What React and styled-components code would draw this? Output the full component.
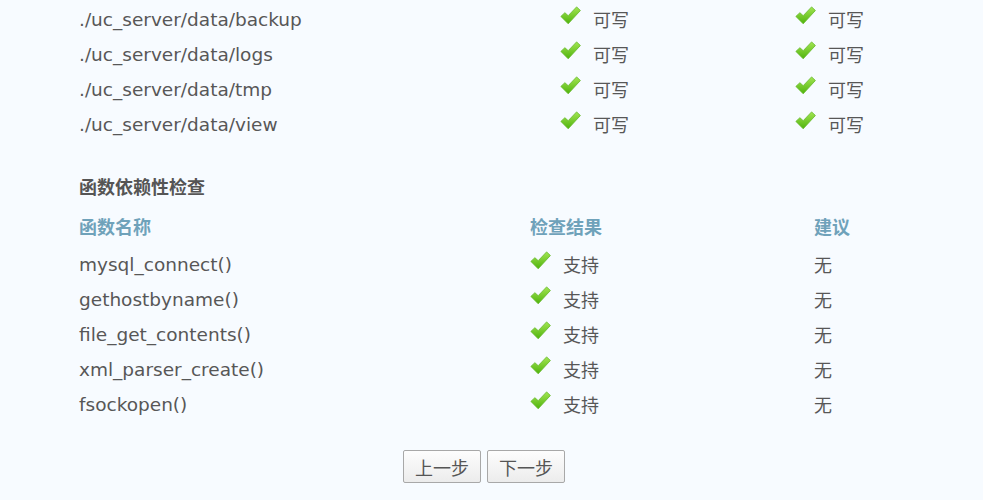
import React from "react";
import styled, { createGlobalStyle } from "styled-components";

const Global = createGlobalStyle`
  html, body { margin: 0; padding: 0; background: #f7fbff; }
  body {
    font-family: "DejaVu Sans", Verdana, "Noto Sans CJK SC", sans-serif;
    font-size: 18.5px;
    color: #575757;
  }
`;

const Page = styled.div`
  width: 983px;
  height: 500px;
  overflow: hidden;
  box-sizing: border-box;
  padding: 2px 0 0 79px;
`;

const Grid = styled.div`
  display: grid;
  grid-template-columns: ${(p) => p.$cols};
  grid-auto-rows: 35px;
  align-items: center;
`;

const Cell = styled.div`
  display: flex;
  align-items: center;
  white-space: nowrap;
  line-height: 35px;
`;

const HeadCell = styled(Cell)`
  font-weight: bold;
  color: #6fa2ba;
  font-family: "Noto Sans CJK SC", sans-serif;
  font-size: 18px;
`;

const Cjk = styled.span`
  font-family: "Noto Sans CJK SC", sans-serif;
  font-size: 18px;
  margin-left: ${(p) => p.$ml || 0}px;
`;

const Title = styled.div`
  margin-top: 30px;
  font-weight: bold;
  font-family: "Noto Sans CJK SC", sans-serif;
  font-size: 18px;
  color: #555;
  line-height: 28px;
`;

const HeadGrid = styled(Grid)`
  margin-top: 9px;
  grid-auto-rows: 38px;
  align-items: start;
`;

const Buttons = styled.div`
  display: flex;
  justify-content: center;
  gap: 6px;
  margin-top: 28px;
  padding-right: 94px;
`;

const Btn = styled.button`
  width: 78px;
  height: 33px;
  border: 1px solid #a8a8a8;
  border-radius: 2px;
  background: linear-gradient(#fdfdfd, #ececec);
  font-family: "Noto Sans CJK SC", sans-serif;
  font-size: 18px;
  color: #555;
  padding: 0;
  cursor: pointer;
`;

const CheckSvg = styled.svg`
  width: 21px;
  height: 19px;
  position: relative;
  top: -4px;
  flex: none;
`;

const Check = () => (
  <CheckSvg viewBox="0 0 21 19">
    <defs>
      <linearGradient id="cg" x1="0" y1="0" x2="0" y2="1">
        <stop offset="0" stopColor="#a3e552" />
        <stop offset="1" stopColor="#4fb30c" />
      </linearGradient>
    </defs>
    <path
      d="M0.9 10.4 L4.9 6.7 L8.2 9.7 L16.6 0.9 L20.4 4.5 L8.2 17.8 Z"
      fill="url(#cg)"
      stroke="#62b826"
      strokeWidth="0.8"
      strokeLinejoin="round"
    />
  </CheckSvg>
);

const dirs = [
  "./uc_server/data/backup",
  "./uc_server/data/logs",
  "./uc_server/data/tmp",
  "./uc_server/data/view",
];

const funcs = [
  "mysql_connect()",
  "gethostbyname()",
  "file_get_contents()",
  "xml_parser_create()",
  "fsockopen()",
];

export default function App() {
  return (
    <>
      <Global />
      <Page>
        <Grid $cols="481px 235px 1fr">
          {dirs.map((d) => (
            <React.Fragment key={d}>
              <Cell>{d}</Cell>
              <Cell>
                <Check />
                <Cjk $ml={12}>可写</Cjk>
              </Cell>
              <Cell>
                <Check />
                <Cjk $ml={12}>可写</Cjk>
              </Cell>
            </React.Fragment>
          ))}
        </Grid>
        <Title>函数依赖性检查</Title>
        <HeadGrid $cols="451px 284px 1fr">
          <HeadCell>函数名称</HeadCell>
          <HeadCell>检查结果</HeadCell>
          <HeadCell>建议</HeadCell>
        </HeadGrid>
        <Grid $cols="451px 284px 1fr">
          {funcs.map((f) => (
            <React.Fragment key={f}>
              <Cell>{f}</Cell>
              <Cell>
                <Check />
                <Cjk $ml={12}>支持</Cjk>
              </Cell>
              <Cell>
                <Cjk>无</Cjk>
              </Cell>
            </React.Fragment>
          ))}
        </Grid>
        <Buttons>
          <Btn>上一步</Btn>
          <Btn>下一步</Btn>
        </Buttons>
      </Page>
    </>
  );
}
